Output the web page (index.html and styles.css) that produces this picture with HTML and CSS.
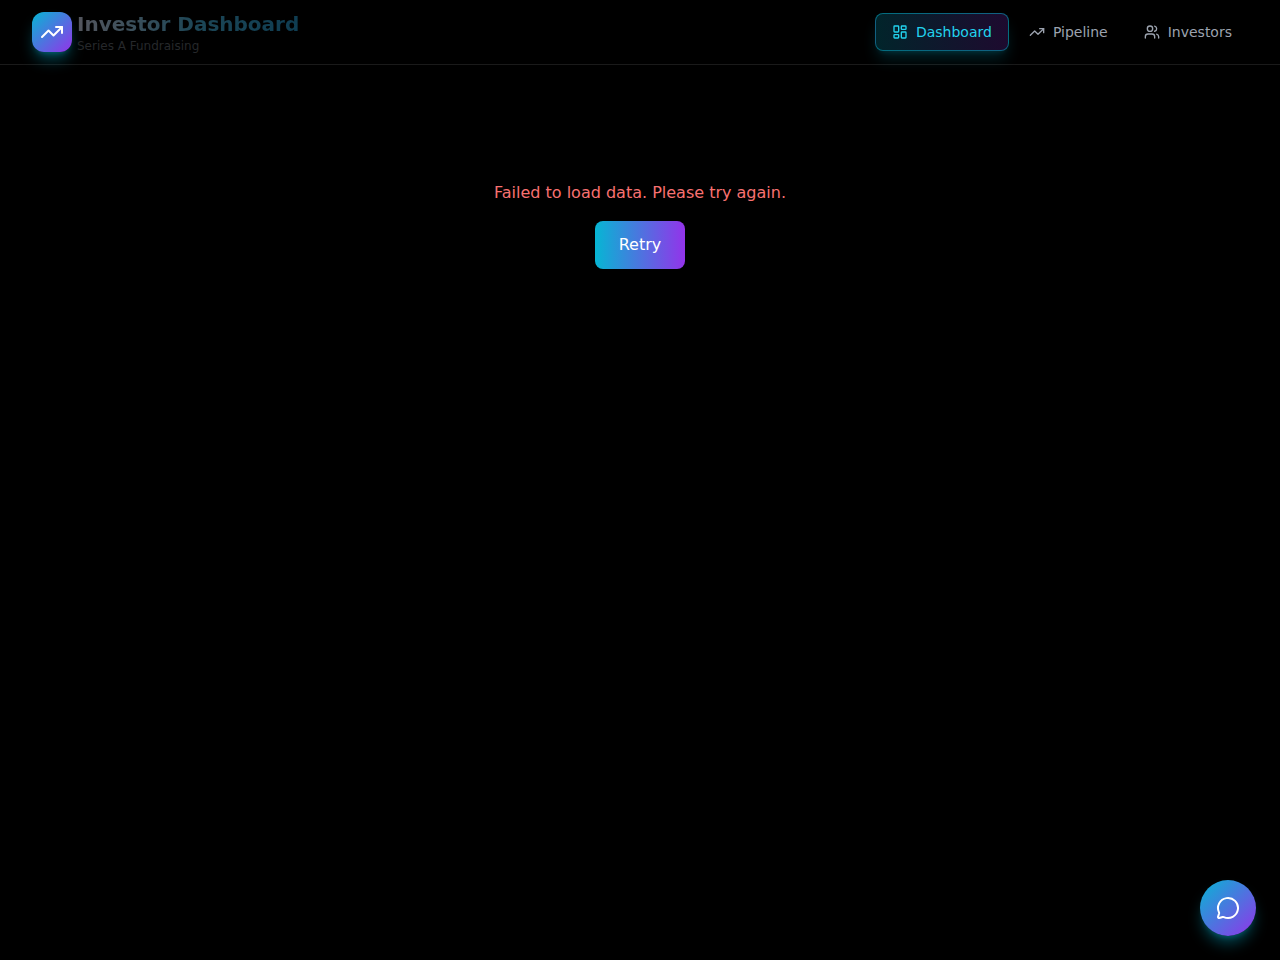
FILE: index.html
```html
<!DOCTYPE html>
<html lang="en">
<head>
    <meta charset="UTF-8">
    <meta name="viewport" content="width=device-width, initial-scale=1.0">
    <title>Investor Dashboard</title>
    <link rel="stylesheet" href="styles.css">
</head>
<body>

<header class="header">
    <div class="brand">
        <div class="brand-logo">
            <svg class="icon icon-lg" viewBox="0 0 24 24" aria-hidden="true">
                <path d="M16 7h6v6"/>
                <path d="m22 7-8.5 8.5-5-5L2 17"/>
            </svg>
        </div>
        <div class="brand-text">
            <h1 class="brand-title">Investor Dashboard</h1>
            <p class="brand-subtitle">Series A Fundraising</p>
        </div>
    </div>

    <nav class="nav">
        <a href="#dashboard" class="nav-link active" aria-current="page">
            <svg class="icon" viewBox="0 0 24 24" aria-hidden="true">
                <rect width="7" height="9" x="3" y="3" rx="1"/>
                <rect width="7" height="5" x="14" y="3" rx="1"/>
                <rect width="7" height="9" x="14" y="12" rx="1"/>
                <rect width="7" height="5" x="3" y="16" rx="1"/>
            </svg>
            <span>Dashboard</span>
        </a>
        <a href="#pipeline" class="nav-link">
            <svg class="icon" viewBox="0 0 24 24" aria-hidden="true">
                <path d="M16 7h6v6"/>
                <path d="m22 7-8.5 8.5-5-5L2 17"/>
            </svg>
            <span>Pipeline</span>
        </a>
        <a href="#investors" class="nav-link">
            <svg class="icon" viewBox="0 0 24 24" aria-hidden="true">
                <path d="M16 21v-2a4 4 0 0 0-4-4H6a4 4 0 0 0-4 4v2"/>
                <path d="M16 3.128a4 4 0 0 1 0 7.744"/>
                <path d="M22 21v-2a4 4 0 0 0-3-3.87"/>
                <circle cx="9" cy="7" r="4"/>
            </svg>
            <span>Investors</span>
        </a>
    </nav>
</header>

<main class="main">
    <div class="error-state">
        <p class="error-message">Failed to load data. Please try again.</p>
        <button type="button" class="retry-button">Retry</button>
    </div>
</main>

<button type="button" class="chat-button" aria-label="Open chat">
    <svg class="icon icon-lg" viewBox="0 0 24 24" aria-hidden="true">
        <path d="M2.992 16.342a2 2 0 0 1 .094 1.167l-1.065 3.29a1 1 0 0 0 1.236 1.168l3.413-.998a2 2 0 0 1 1.099.092 10 10 0 1 0-4.777-4.719"/>
    </svg>
</button>

</body>
</html>
```

FILE: styles.css
```css
* {
    box-sizing: border-box;
}

body {
    font-family: "DejaVu Sans", sans-serif;
    font-size: 16px;
    line-height: 24px;
    background-color: #000;
    color: #fff;
    margin: 0;
}

h1, p {
    margin: 0;
}

.icon {
    width: 16px;
    height: 16px;
    flex-shrink: 0;
    fill: none;
    stroke: currentColor;
    stroke-width: 2;
    stroke-linecap: round;
    stroke-linejoin: round;
}

.icon-lg {
    width: 24px;
    height: 24px;
}

/* Header */
.header {
    display: flex;
    align-items: center;
    justify-content: space-between;
    min-height: 65px;
    padding: 0 32px;
    border-bottom: 1px solid rgba(255, 255, 255, 0.1);
}

.brand {
    display: flex;
    align-items: center;
    gap: 5px;
}

.brand-logo {
    display: flex;
    align-items: center;
    justify-content: center;
    width: 40px;
    height: 40px;
    border-radius: 12px;
    background: linear-gradient(to bottom right, #06b6d4, #9333ea);
    box-shadow: 0 10px 15px -3px rgba(6, 182, 212, 0.4), 0 4px 6px -4px rgba(6, 182, 212, 0.4);
}

.brand-title {
    font-size: 20px;
    line-height: 28px;
    font-weight: 700;
    color: transparent;
    background: linear-gradient(to right, #54565e, #1c4656 55%, #0f3d52);
    -webkit-background-clip: text;
    background-clip: text;
}

.brand-subtitle {
    font-size: 12px;
    line-height: 16px;
    color: #26282b;
}

.nav {
    display: flex;
    align-items: center;
    gap: 4px;
}

.nav-link {
    display: flex;
    align-items: center;
    gap: 8px;
    padding: 8px 16px;
    border-radius: 8px;
    font-size: 14px;
    line-height: 20px;
    color: #9ca3af;
    text-decoration: none;
}

.nav-link:hover {
    color: #fff;
}

.nav-link.active {
    color: #22d3ee;
    border: 1px solid rgba(6, 182, 212, 0.5);
    background: linear-gradient(to right, rgba(6, 182, 212, 0.2), rgba(147, 51, 234, 0.2));
    box-shadow: 0 10px 15px -3px rgba(6, 182, 212, 0.2), 0 4px 6px -4px rgba(6, 182, 212, 0.2);
}

/* Content */
.main {
    padding: 32px;
}

.error-state {
    display: flex;
    flex-direction: column;
    align-items: center;
    justify-content: center;
    gap: 16px;
    min-height: 256px;
}

.error-message {
    color: #f87171;
}

.retry-button {
    padding: 12px 24px;
    border: none;
    border-radius: 8px;
    font: inherit;
    color: #fff;
    background: linear-gradient(to right, #06b6d4, #9333ea);
    cursor: pointer;
}

/* Floating chat button */
.chat-button {
    position: fixed;
    right: 24px;
    bottom: 24px;
    display: flex;
    align-items: center;
    justify-content: center;
    width: 56px;
    height: 56px;
    padding: 0;
    border: none;
    border-radius: 50%;
    color: #fff;
    background: linear-gradient(to bottom right, #06b6d4, #9333ea);
    box-shadow: 0 10px 15px -3px rgba(6, 182, 212, 0.4), 0 4px 6px -4px rgba(6, 182, 212, 0.4);
    cursor: pointer;
}
```
